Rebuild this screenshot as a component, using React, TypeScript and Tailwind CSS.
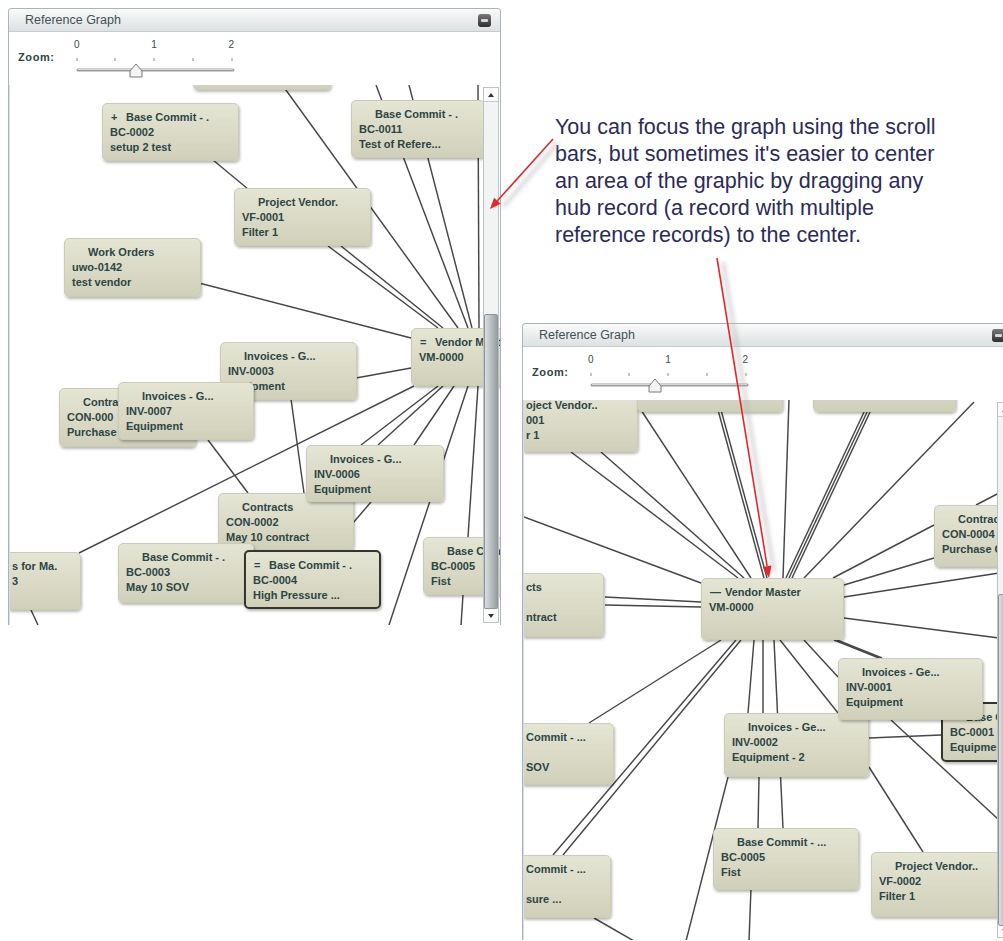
import clsx from "clsx";

type GraphNode = {
  x: number;
  y: number;
  w: number;
  h: number;
  t: string[];
  icon?: string;
  sel?: boolean;
  part?: boolean;
};
type Edge = [number, number, number, number];

// node boxes are relative to the graph box, edges are in page pixels (the svg group shifts them)
const p1Nodes: GraphNode[] = [
  { x: 183, y: -53, w: 138, h: 58, t: [] },
  { x: 92, y: 18, w: 137, h: 58, icon: "+", t: ["Base Commit - .", "BC-0002", "setup 2 test"] },
  { x: 341, y: 15, w: 134, h: 58, t: ["Base Commit - .", "BC-0011", "Test of Refere..."] },
  { x: 224, y: 103, w: 137, h: 58, t: ["Project Vendor.", "VF-0001", "Filter 1"] },
  { x: 54, y: 153, w: 137, h: 59, t: ["Work Orders", "uwo-0142", "test vendor"] },
  { x: 401, y: 243, w: 137, h: 58, icon: "=", t: ["Vendor Master", "VM-0000"] },
  { x: 210, y: 257, w: 137, h: 58, t: ["Invoices - G...", "INV-0003", "Equipment"] },
  { x: 49, y: 303, w: 137, h: 59, t: ["Contra", "CON-000", "Purchase"] },
  { x: 108, y: 297, w: 136, h: 58, t: ["Invoices - G...", "INV-0007", "Equipment"] },
  { x: 208, y: 408, w: 136, h: 57, t: ["Contracts", "CON-0002", "May 10 contract"] },
  { x: 296, y: 360, w: 138, h: 57, t: ["Invoices - G...", "INV-0006", "Equipment"] },
  { x: 108, y: 458, w: 136, h: 60, t: ["Base Commit - .", "BC-0003", "May 10 SOV"] },
  { x: 234, y: 465, w: 137, h: 59, icon: "=", sel: true, t: ["Base Commit - .", "BC-0004", "High Pressure ..."] },
  { x: 413, y: 452, w: 137, h: 58, t: ["Base Commit - .", "BC-0005", "Fist"] },
  { x: -1, y: 467, w: 72, h: 58, part: true, t: ["s for Ma.", "3", ""] },
];

const p1Edges: Edge[] = [
  [282, 86, 457, 328],
  [375, 85, 467, 328],
  [408, 85, 471, 328],
  [477, 85, 478, 328],
  [212, 160, 247, 189],
  [327, 246, 437, 328],
  [340, 246, 442, 328],
  [198, 283, 410, 338],
  [355, 378, 410, 368],
  [413, 386, 78, 553],
  [437, 386, 360, 445],
  [442, 386, 377, 445],
  [453, 386, 413, 445],
  [467, 386, 388, 625],
  [477, 386, 467, 537],
  [462, 595, 460, 625],
  [290, 399, 303, 493],
  [207, 440, 247, 493],
  [352, 523, 370, 502],
  [30, 610, 37, 625],
];

const p2Nodes: GraphNode[] = [
  { x: -1, y: -9, w: 115, h: 61, part: true, t: ["oject Vendor..", "001", "r 1"] },
  { x: 113, y: -50, w: 146, h: 62, t: [] },
  { x: 289, y: -50, w: 143, h: 62, t: [] },
  { x: 410, y: 105, w: 146, h: 62, t: ["Contracts", "CON-0004", "Purchase Order"] },
  { x: -1, y: 173, w: 81, h: 64, part: true, t: ["cts", "", "ntract"] },
  { x: 177, y: 178, w: 143, h: 62, icon: "—", t: ["Vendor Master", "VM-0000"] },
  { x: -1, y: 323, w: 91, h: 62, part: true, t: ["Commit - ...", "", "SOV"] },
  { x: -1, y: 455, w: 88, h: 63, part: true, t: ["Commit - ...", "", "sure ..."] },
  { x: 417, y: 302, w: 145, h: 60, sel: true, t: ["Base Commit - ...", "BC-0001", "Equipment"] },
  { x: 200, y: 313, w: 145, h: 64, t: ["Invoices - Ge...", "INV-0002", "Equipment - 2"] },
  { x: 314, y: 258, w: 145, h: 62, t: ["Invoices - Ge...", "INV-0001", "Equipment"] },
  { x: 189, y: 428, w: 146, h: 62, t: ["Base Commit - ...", "BC-0005", "Fist"] },
  { x: 347, y: 452, w: 145, h: 65, t: ["Project Vendor..", "VF-0002", "Filter 1"] },
];

const p2Edges: Edge[] = [
  [570, 452, 737, 578],
  [600, 452, 743, 578],
  [640, 410, 750, 578],
  [717, 410, 763, 578],
  [720, 410, 766, 578],
  [523, 517, 700, 583],
  [604, 597, 700, 602],
  [604, 605, 700, 607],
  [788, 400, 782, 578],
  [864, 410, 785, 578],
  [867, 410, 788, 578],
  [870, 410, 791, 578],
  [973, 402, 803, 578],
  [933, 525, 832, 578],
  [933, 558, 843, 585],
  [843, 597, 998, 573],
  [843, 618, 998, 638],
  [975, 505, 998, 493],
  [803, 640, 837, 677],
  [833, 640, 878, 658],
  [836, 640, 881, 658],
  [588, 723, 720, 640],
  [552, 855, 735, 640],
  [562, 855, 740, 640],
  [747, 713, 753, 640],
  [762, 640, 762, 713],
  [773, 640, 782, 828],
  [779, 640, 837, 713],
  [868, 738, 940, 735],
  [868, 767, 922, 852],
  [890, 720, 998, 820],
  [758, 777, 757, 828],
  [727, 777, 685, 941],
  [750, 888, 748, 941],
  [593, 918, 633, 941],
];

function NodeBox({ n }: { n: GraphNode }) {
  return (
    <div
      className={clsx(
        "absolute overflow-hidden whitespace-nowrap bg-linear-to-b from-[#e5e5d4] to-[#d0d0ba] pt-[6px] text-[11px] font-bold leading-[15px] text-[#2c4545] shadow-[1px_2px_3px_rgba(0,0,0,0.28)]",
        n.part ? "rounded-r-[5px]" : "rounded-[5px]",
        n.sel ? "border-2 border-[#35352c]" : "border border-[#cbcbb6]"
      )}
      style={{ left: n.x, top: n.y, width: n.w, height: n.h }}
    >
      {n.t.map((line, i) => (
        <div
          key={i}
          className={clsx("relative h-[15px]", n.part ? "pl-[2px]" : i === 0 ? "pl-[23px]" : "pl-[7px]")}
        >
          {i === 0 && n.icon && <span className="absolute left-[8px] top-0">{n.icon}</span>}
          {line}
        </div>
      ))}
    </div>
  );
}

function Slider({ thumb }: { thumb: number }) {
  const ticks = [5, 43, 82, 121, 160];
  return (
    <div className="w-[164px] pt-[7px]">
      <div className="flex h-[12px] justify-between px-[2px] text-[10px] leading-[12px] text-[#3b4b4b]">
        <span>0</span>
        <span>1</span>
        <span>2</span>
      </div>
      <svg width="164" height="28" className="block">
        {ticks.map((x) => (
          <line key={x} x1={x} y1={7} x2={x} y2={10} stroke="#8a8a8a" strokeWidth="1" />
        ))}
        <line x1="6" y1="19" x2="161" y2="19" stroke="#9c9c9c" strokeWidth="3" strokeLinecap="round" />
        <line x1="6" y1="18.5" x2="161" y2="18.5" stroke="#d8d8d8" strokeWidth="1" />
        <path
          d={`M${thumb - 6} 26 L${thumb + 6} 26 L${thumb + 6} 20 L${thumb} 13 L${thumb - 6} 20 Z`}
          fill="#f4f4f4"
          stroke="#7a7a7a"
          strokeWidth="1"
        />
      </svg>
    </div>
  );
}

function ScrollBar({ thumbClass }: { thumbClass: string }) {
  return (
    <div className="absolute right-[1px] top-[2px] bottom-[2px] z-20 flex w-[16px] flex-col border border-[#bcc3c7] bg-[#f2f3f3]">
      <div className="flex h-[14px] items-center justify-center border-b border-[#c6cbce] bg-[#fbfbfb]">
        <svg width="6" height="4">
          <path d="M0 4 L3 0 L6 4 Z" fill="#333" />
        </svg>
      </div>
      <div className="relative flex-1">
        <div
          className={clsx(
            "absolute left-0 right-0 rounded-[2px] border border-[#8e959a] bg-linear-to-r from-[#dcdfe1] via-[#b9bec2] to-[#9aa1a5]",
            thumbClass
          )}
        />
      </div>
      <div className="flex h-[14px] items-center justify-center border-t border-[#c6cbce] bg-[#fbfbfb]">
        <svg width="6" height="4">
          <path d="M0 0 L6 0 L3 4 Z" fill="#333" />
        </svg>
      </div>
    </div>
  );
}

function Panel({
  nodes,
  edges,
  ox,
  oy,
  thumb,
  thumbClass,
}: {
  nodes: GraphNode[];
  edges: Edge[];
  ox: number;
  oy: number;
  thumb: number;
  thumbClass: string;
}) {
  return (
    <div className="flex h-[617px] w-[493px] shrink-0 flex-col rounded-t-[4px] border border-b-0 border-[#a9b5bb] bg-white">
      <div className="flex h-[23px] items-center justify-between rounded-t-[4px] border-b border-[#c4ccd0] bg-linear-to-b from-[#f9fafa] to-[#dce1e2] pl-[16px] pr-[9px]">
        <span className="text-[12.5px] text-[#3f5256]">Reference Graph</span>
        <div className="flex h-[13px] w-[13px] items-center justify-center rounded-[3px] bg-linear-to-b from-[#7b7b7b] to-[#2f2f2f]">
          <div className="h-[3px] w-[7px] rounded-[1px] bg-[#d6d6d6]" />
        </div>
      </div>
      <div className="flex h-[53px] items-start pl-[9px]">
        <span className="mt-[19px] w-[54px] text-[11px] font-bold leading-[12px] tracking-[0.6px] text-[#2f4545]">
          Zoom:
        </span>
        <Slider thumb={thumb} />
      </div>
      <div className="relative flex-1 overflow-hidden border-l border-[#d4dde2]">
        <svg className="absolute inset-0" width="100%" height="100%">
          <g transform={`translate(${-ox} ${-oy})`}>
            {edges.map(([x1, y1, x2, y2], i) => (
              <line key={i} x1={x1} y1={y1} x2={x2} y2={y2} stroke="#464646" strokeWidth="1.45" />
            ))}
          </g>
        </svg>
        {nodes.map((n, i) => (
          <NodeBox key={i} n={n} />
        ))}
        <ScrollBar thumbClass={thumbClass} />
      </div>
    </div>
  );
}

export default function App() {
  return (
    <div className="relative h-[941px] w-[1003px] overflow-hidden bg-white font-['Liberation_Sans',Arial,sans-serif]">
      <div className="flex items-start">
        <div className="shrink-0 pl-2 pt-2">
          <Panel nodes={p1Nodes} edges={p1Edges} ox={9} oy={85} thumb={64} thumbClass="top-[212px] h-[295px]" />
        </div>
        <div className="ml-[21px] flex shrink-0 flex-col">
          <p className="whitespace-nowrap pl-[33px] pt-[114px] text-[21.5px] leading-[27px] text-[#2b2b5a]">
            You can focus the graph using the scroll
            <br />
            bars, but sometimes it's easier to center
            <br />
            an area of the graphic by dragging any
            <br />
            hub record (a record with multiple
            <br />
            reference records) to the center.
          </p>
          <div className="mt-[74px]">
            <Panel nodes={p2Nodes} edges={p2Edges} ox={523} oy={400} thumb={69} thumbClass="top-[177px] h-[332px]" />
          </div>
        </div>
      </div>

      {/* annotation arrows sit over both panels */}
      <svg className="pointer-events-none absolute inset-0 z-50" width="1003" height="941">
        <defs>
          <filter id="soft" x="-50%" y="-50%" width="200%" height="200%">
            <feGaussianBlur stdDeviation="2" />
          </filter>
        </defs>
        <g filter="url(#soft)" opacity="0.55">
          <line x1="558" y1="143" x2="503" y2="207" stroke="#b8b8b8" strokeWidth="4" />
          <line x1="723" y1="262" x2="774" y2="572" stroke="#b8b8b8" strokeWidth="4" />
        </g>
        <line x1="553" y1="139" x2="497.4" y2="200.8" stroke="#e8262a" strokeWidth="1.6" />
        <polygon points="490,209 500.7,203.8 494.1,197.8" fill="#e8262a" />
        <line x1="717" y1="258" x2="767.1" y2="566.2" stroke="#e8262a" strokeWidth="1.6" />
        <polygon points="769,578 771.5,565.5 762.6,566.9" fill="#e8262a" />
      </svg>
    </div>
  );
}
